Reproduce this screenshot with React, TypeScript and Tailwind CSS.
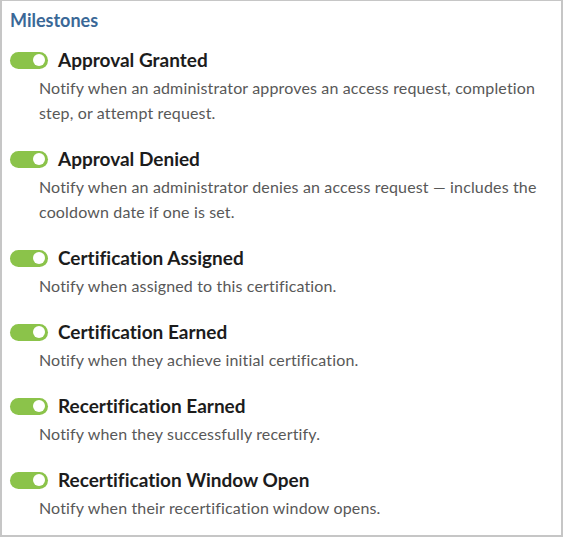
import { useState } from "react"

type Milestone = {
  title: string
  description: string
}

const milestones: Milestone[] = [
  {
    title: "Approval Granted",
    description: "Notify when an administrator approves an access request, completion step, or attempt request.",
  },
  {
    title: "Approval Denied",
    description: "Notify when an administrator denies an access request \u2014 includes the cooldown date if one is set.",
  },
  { title: "Certification Assigned", description: "Notify when assigned to this certification." },
  { title: "Certification Earned", description: "Notify when they achieve initial certification." },
  { title: "Recertification Earned", description: "Notify when they successfully recertify." },
  { title: "Recertification Window Open", description: "Notify when their recertification window opens." },
]

function Toggle({ on, onChange }: { on: boolean; onChange: () => void }) {
  return (
    <button
      type="button"
      onClick={onChange}
      className={`flex h-[17px] w-[38px] shrink-0 items-center rounded-full px-[3px] ${
        on ? "justify-end bg-[#8bc34a]" : "justify-start bg-[#c4c4c4]"
      }`}
    >
      <span className="h-[12px] w-[12px] rounded-full bg-white" />
    </button>
  )
}

export default function App() {
  const [enabled, setEnabled] = useState<boolean[]>(milestones.map(() => true))

  const toggle = (index: number) => {
    setEnabled((prev) => prev.map((v, i) => (i === index ? !v : v)))
  }

  return (
    <div
      className="h-[537px] w-[563px] border-x-2 border-b-2 border-t border-[#c6c6c6] bg-white pl-[8px] pr-4 pt-[8px] [font-variant-ligatures:none]"
      style={{ fontFamily: "Lato, 'Open Sans', sans-serif" }}
    >
      <h2 className="text-[18px] font-bold leading-[22px] text-[#3a6897]">Milestones</h2>

      <div className="mt-[17px] flex flex-col gap-[22px]">
        {milestones.map((m, i) => (
          <div key={m.title}>
            <div className="flex h-6 items-center gap-[10px]">
              <Toggle on={enabled[i]} onChange={() => toggle(i)} />
              <span className="text-[19px] font-bold leading-6 text-[#1c1c1c]">{m.title}</span>
            </div>
            <p className="mt-[3px] pl-[29px] text-[16px] leading-[25px] tracking-[0.15px] text-[#585858]">
              {m.description}
            </p>
          </div>
        ))}
      </div>
    </div>
  )
}
